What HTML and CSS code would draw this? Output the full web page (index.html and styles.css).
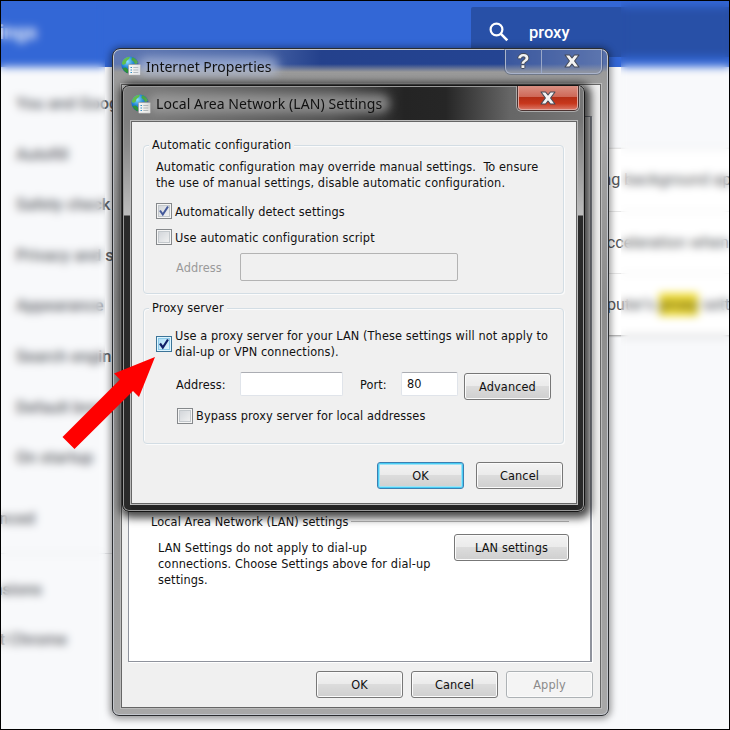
FILE: index.html
```html
<!DOCTYPE html>
<html lang="en">
<head>
<meta charset="utf-8">
<title>Proxy settings</title>
<link rel="stylesheet" href="styles.css">
</head>
<body>
<svg class="defs" width="0" height="0" aria-hidden="true">
  <defs>
    <radialGradient id="sea" cx=".35" cy=".3" r=".75">
      <stop offset="0" stop-color="#8fe0ff"/><stop offset=".45" stop-color="#2489d8"/><stop offset="1" stop-color="#0c2f86"/>
    </radialGradient>
    <symbol id="globe" viewBox="0 0 20 20">
      <circle cx="9" cy="9" r="8.6" fill="url(#sea)"/>
      <path d="M3 3.2Q6 .3 9 .7L8 3 5.500 5 4.500 8 2 9 .8 7.500Q1.200 5 3 3.200Z" fill="#62bd4b"/>
      <path d="M11 1.300Q15.500 2.600 17 6.500L14.500 8.500 12.500 5.500 10.500 4Z" fill="#45a53e"/>
      <path d="M1.500 12 5 11.500 7.500 14 7 17.200Q3.200 16 1.500 12Z" fill="#2f9438"/>
      <rect x="7.500" y="8.500" width="12" height="10.800" rx=".8" fill="#f4f4f2" stroke="#999" stroke-width=".7"/>
      <path d="M9.500 11.500h1.500M9.500 14h1.500M9.500 16.500h1.500" stroke="#3190c9" stroke-width="1.200"/>
      <path d="M12.300 11.500h5M12.300 14h5M12.300 16.500h5" stroke="#adb3b7" stroke-width=".9"/>
    </symbol>
    <symbol id="cross" viewBox="0 0 16 14">
      <path d="M1 1H5.600L8 4 10.400 1H15L10.600 7 15 13H10.400L8 10 5.600 13H1L5.400 7Z" fill="#f3f3f3" stroke="#464b58" stroke-width="1.100" stroke-linejoin="round"/>
    </symbol>
  </defs>
</svg>
<main class="screen">
  <header class="topbar">
    <h1 class="brand">Settings</h1>
    <div class="search">
      <svg width="20" height="20" viewBox="0 0 20 20"><circle cx="7.500" cy="7.500" r="5.900" fill="none" stroke="#fff" stroke-width="2.200"/><path d="M11.700 11.700 18.300 18.300" stroke="#fff" stroke-width="2.600"/></svg>
      <span>proxy</span>
    </div>
  </header>
  <div class="page">
    <nav class="sidebar">
      <a>You and Google</a><a>Autofill</a><a>Safety check</a><a>Privacy and security</a>
      <a>Appearance</a><a>Search engine</a><a>Default browser</a><a>On startup</a>
      <div class="more">
        <span class="adv">Advanced</span>
        <span class="ext">Extensions</span>
        <span class="about">About Chrome</span>
      </div>
    </nav>
    <section class="card">
      <p class="r1">running background apps</p>
      <p class="r2">acceleration when</p>
      <p class="r3">computer's <mark>proxy</mark> settings</p>
    </section>
  </div>
  <div class="haze haze-left"></div>
  <div class="haze haze-right"></div>

  <section class="window outer">
    <div class="titlebar">
      <svg class="icon" width="20" height="20"><use href="#globe"/></svg>
      <h2>Internet Properties</h2>
      <div class="controls">
        <span class="help">?</span>
        <span class="close"><svg width="16" height="14"><use href="#cross"/></svg></span>
      </div>
    </div>
    <div class="client">
      <div class="tabpanel">
        <div class="heading"><span class="t-lan">Local Area Network (LAN) settings</span><i></i></div>
        <div class="lan">
          <p>LAN Settings do not apply to dial-up<br>connections. Choose Settings above for dial-up<br>settings.</p>
          <button class="btn wide">LAN settings</button>
        </div>
      </div>
      <div class="actions">
        <button class="btn">OK</button><button class="btn">Cancel</button><button class="btn" disabled>Apply</button>
      </div>
    </div>
  </section>

  <section class="window inner">
    <div class="titlebar">
      <svg class="icon" width="20" height="20"><use href="#globe"/></svg>
      <h2>Local Area Network (LAN) Settings</h2>
      <span class="redclose"><svg width="16" height="14"><use href="#cross"/></svg></span>
    </div>
    <div class="client">
      <div class="group auto">
        <h3>Automatic configuration</h3>
        <p class="note">Automatic configuration may override manual settings.&nbsp; To ensure<br>the use of manual settings, disable automatic configuration.</p>
        <div class="check"><span class="box"><svg width="12" height="12" viewBox="0 0 12 12"><path d="M2 5.500 4.800 9.500 10 1.500" fill="none" stroke="#44599a" stroke-width="2"/></svg></span><span>Automatically detect settings</span></div>
        <div class="check"><span class="box"></span><span>Use automatic configuration script</span></div>
        <div class="script"><span>Address</span><span class="field off"></span></div>
      </div>
      <div class="group proxy">
        <h3>Proxy server</h3>
        <div class="check two"><span class="box hot"><svg width="12" height="12" viewBox="0 0 12 12"><path d="M2 5.500 4.800 9.500 10 1.500" fill="none" stroke="#101f68" stroke-width="2.200"/></svg></span><span>Use a proxy server for your LAN (These settings will not apply to<br>dial-up or VPN connections).</span></div>
        <div class="address">
          <span class="lab">Address:</span><span class="field addr"></span>
          <span class="lab port">Port:</span><span class="field num">80</span>
          <button class="btn">Advanced</button>
        </div>
        <div class="check bypass"><span class="box"></span><span>Bypass proxy server for local addresses</span></div>
      </div>
      <div class="actions">
        <button class="btn default">OK</button><button class="btn">Cancel</button>
      </div>
    </div>
  </section>
  <svg class="arrow" width="94" height="94" viewBox="0 0 94 94"><path d="M93 0 77 40 71 34 12.500 92 .5 80 58 22.500 52 16.500Z" fill="#f00"/></svg>
</main>
</body>
</html>
```
FILE: styles.css
```css
* { box-sizing: border-box; margin: 0; padding: 0; }
body { width: 730px; height: 730px; overflow: hidden; }
.defs { position: absolute; }
.screen {
  position: relative; width: 730px; height: 730px; overflow: hidden;
  background: #f8f9fb; font-family: "DejaVu Sans Condensed", "DejaVu Sans", sans-serif; font-stretch: condensed; font-size: 12.600px; letter-spacing: .11px; color: #111;
}
.screen::after { content: ""; position: absolute; inset: 0; border: 1px solid #000; z-index: 9; }

/* settings page */
.topbar { display: flex; justify-content: space-between; height: 67px; background: #3367d6; font-family: Roboto, sans-serif; font-stretch: normal; letter-spacing: 0; }
.brand { display: flex; justify-content: flex-end; width: 37px; line-height: 65px; font-size: 20px; font-weight: 500; color: #fff; }
.search { display: flex; align-items: center; width: 259px; height: 50px; margin-top: 7px; padding-left: 18px; background: #2850a7; border-radius: 2px 0 0 2px; color: #fff; font-size: 16.500px; font-weight: 500; }
.search span { margin-left: 20px; }
.page { display: flex; justify-content: space-between; font: 500 16.400px Roboto, sans-serif; letter-spacing: 0; }
.sidebar { width: 230px; padding-top: 11px; color: #5f6368; }
.sidebar a { display: block; height: 50.600px; line-height: 51px; padding-left: 16px; white-space: nowrap; }
.more { line-height: 50px; }
.more span { display: flex; justify-content: flex-end; white-space: nowrap; }
.more .adv { width: 35px; height: 70px; line-height: 72px; }
.more .ext { border-top: 1px solid #e1e3e6; width: 230px; padding-right: 188px; height: 62px; line-height: 72px; }
.more .about { width: 67px; height: 50px; }
.card { width: 170px; height: 187px; margin-top: 81px; background: #fff; box-shadow: 0 1px 2px #999; color: #55585c; font-size: 16.200px; font-weight: 400; overflow: hidden; }
.card p { height: 62.500px; line-height: 62px; white-space: nowrap; border-top: 1px solid #e6e6e6; }
.r1 { padding-left: 6px; } .r2 { padding-left: 38px; } .r3 { padding-left: 15px; }
mark { background: #f0dc32; color: #4c4820; padding: 2px 0; }
.haze { position: absolute; top: 0; bottom: 0; backdrop-filter: blur(4.500px); }
.haze-left { left: 0; width: 105px; }
.haze-right { left: 621px; right: 0; }

/* windows */
.window { position: absolute; display: flex; flex-direction: column; border: 1px solid #2b2d30; }
.outer { left: 112px; top: 48px; width: 497px; height: 668px; border-radius: 8px 8px 7px 7px; padding: 0 7px 7px 8px;
  background: linear-gradient(#0000 15px, #9a9a9a 23px, #a6a6a6 90px, #8c8c8c 250px, #a8a8a8), linear-gradient(90deg, #6078b2 0, #4c68a9 28%, #24418c 42%, #244492 78%, #5871ab);
  box-shadow: inset 0 0 0 1px #c4c7cd, 0 1px 7px 2px #0006; }
.inner { left: 122px; top: 85px; width: 463px; height: 427px; border-radius: 7px; padding: 0 7px 7px 8px; border-color: #151515;
  background: linear-gradient(90deg, #0000 7px, #242424 9px, #242424 453px, #0000 455px) 0 100%/100% 9px no-repeat,
   linear-gradient(#0000 35px, #8a8a8a 60px, #bdbdbd 129px, #2a2a2a 130px, #2a2a2a),
   linear-gradient(90deg, #808080, #6c6c6c 18%, #505050 45%, #242424 61%, #262626 70%, #666 84%, #777);
  box-shadow: inset 0 0 0 1px #999, 2px 2px 9px 4px #000b; }
.titlebar { display: flex; align-items: center; height: 35px; flex: none; }
.titlebar h2 { position: relative; z-index: 0; font: 400 14px "Noto Sans", sans-serif; letter-spacing: 0; white-space: nowrap; margin: 0 0 0 5px; }
.titlebar h2::before { content: ""; position: absolute; inset: 0 -8px; z-index: -1; border-radius: 10px; background: #b4c0dcaa; filter: blur(5px); }
.inner h2::before { background: #a4a4a4bb; }
.icon { flex: none; }
.inner .titlebar h2 { letter-spacing: .08px; }
.outer .icon { margin-top: -1px; }
.controls { display: flex; align-self: flex-start; width: 97px; height: 25px; margin: 0 -1px 0 auto; border: 1px solid #aab4cc; border-top: 0; border-radius: 0 0 6px 6px; background: #6f87bd44; box-shadow: 0 0 0 1px #33456f66; clip-path: inset(0 -2px -2px -2px); }
.controls span { display: grid; place-items: center; }
.help { width: 36px; border-right: 1px solid #99a7c8; color: #f3f3f3; font: 700 20px/24px "Liberation Sans", sans-serif; text-shadow: 1px 0 #464b58, -1px 0 #464b58, 0 1px #464b58, 0 -1px #464b58; }
.close { flex: 1; }
.redclose { display: grid; place-items: center; align-self: flex-start; width: 60px; height: 24px; margin: 0 -1px 0 auto; border: 1px solid #e0a8a0; border-top: 0; border-radius: 0 0 4px 4px; background: linear-gradient(#d99083, #cf6958 46%, #b52f17 50%, #c7361b 75%, #d8705e); box-shadow: 0 0 0 1px #4b3230, 0 0 0 2px #aaa; clip-path: inset(0 -3px -3px -3px); }
.client { flex: 1; border: 1px solid #666; background: #f0f0f0; outline: 1px solid #bbb; color: #111; }
.btn { display: block; width: 87px; height: 27px; border: 1px solid #777; border-radius: 3px; font: inherit; letter-spacing: inherit; color: #111; background: linear-gradient(#f3f3f3, #ebebeb 48%, #dcdcdc 50%, #cfcfcf); box-shadow: inset 0 0 0 1px #fbfbfb; }
.btn:disabled { color: #8b8b8b; background: #f4f4f4; border-color: #adb2b5; }
.default { border-color: #3c7fb1; box-shadow: inset 0 0 0 1px #48cdf5, inset 0 0 0 2px #9fe2f5; }

.outer .client { padding: 31px 7px 0 6px; }
.tabpanel { height: 546px; width: 464px; background: #fff; border: 1px solid #8f939d; border-right-width: 2px; padding: 396px 21px 0 22px; box-shadow: 1px 1px #fff; }
.heading { display: flex; align-items: center; height: 17px; white-space: nowrap; }
.heading i { flex: 1; height: 1px; background: #bbb; margin-left: 2px; }
.lan { display: flex; justify-content: space-between; padding: 4px 0 0 7px; }
.lan p { padding-top: 6px; line-height: 16.200px; white-space: nowrap; }
.lan .btn { width: 115px; }
.actions { display: flex; justify-content: flex-end; }
.outer .actions { gap: 8px; padding-top: 9px; margin-right: 0; }

.inner .client { padding: 23px 13px 0 11px; }
.group { position: relative; width: 421px; border: 1px solid #d3dde4; border-radius: 4px; box-shadow: inset 1px 1px #fbfbfb, 1px 1px #fbfbfb; padding-left: 12px; white-space: nowrap; }
.group h3 { width: max-content; height: 16px; margin: -9px 0 0 -7px; padding: 0 3px; font: inherit; line-height: 16px; background: #f0f0f0; }
.auto { height: 149px; }
.note { margin: 6px 0 7px; line-height: 16px; }
.check { display: flex; align-items: center; height: 26px; gap: 3px; }
.box { display: grid; place-items: center; width: 16px; height: 16px; flex: none; border: 1px solid #85888b; background: linear-gradient(135deg, #cdd1d6, #f5f5f5); box-shadow: inset 0 0 0 1px #f5f5f5, inset 0 0 0 2px #c3c8cc; }
.hot { border-color: #3c7498; background: linear-gradient(135deg, #a7dcf7, #e5f6fd); box-shadow: inset 0 0 0 1px #def5ff, inset 0 0 0 2px #8dcbea; }
.script { display: flex; align-items: center; margin-top: 3px; padding-left: 20px; color: #9a9a9a; }
.script .field { width: 218px; height: 28px; margin-left: auto; margin-right: 105px; }
.field { background: #fff; border: 1px solid #e0e4ea; border-top-color: #abadb3; border-radius: 2px; }
.off { background: #f0f0f0; border: 1px solid #b3b3b3; }
.proxy { height: 136px; margin-top: 14px; }
.two { height: 32px; margin-top: 12px; line-height: 16px; }
.address { display: flex; margin-top: 12px; padding-left: 20px; height: 28px; }
.lab { width: 64px; line-height: 25px; }
.port { width: 41px; margin-left: 17px; }
.addr { width: 103px; height: 24px; }
.num { width: 57px; height: 24px; line-height: 22px; padding-left: 5px; }
.address .btn { margin: 1px 0 0 6px; }
.bypass { height: 17px; margin: 7px 0 0 21px; }
.inner .actions { gap: 12px; padding-top: 18px; margin-right: 0; }
.arrow { position: absolute; left: 62px; top: 357px; }
```
